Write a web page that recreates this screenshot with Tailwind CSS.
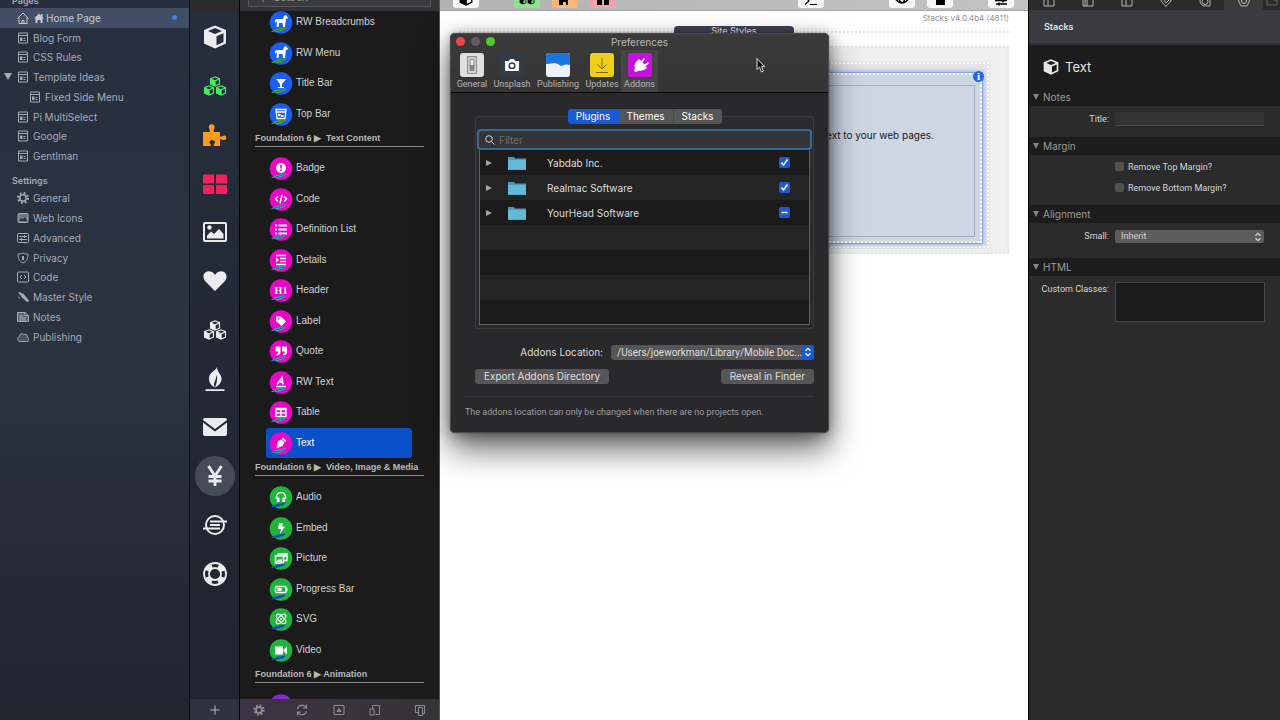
<!DOCTYPE html>
<html lang="en">
<head>
    <meta charset="UTF-8">
    <meta name="viewport" content="width=device-width, initial-scale=1.0">
    <title>RapidWeaver - Home Page</title>
    <script src="https://cdn.jsdelivr.net/npm/@tailwindcss/browser@4"></script>
</head>
<body class="relative flex h-screen overflow-hidden bg-white font-['Inter','Liberation_Sans',sans-serif] text-[11px] leading-4">

    <!-- shared icons -->
    <svg class="hidden">
        <symbol id="cube" viewBox="0 0 24 24"><path fill="currentColor" fill-rule="evenodd" d="M12 .5 23 5v13.5L12 23.5 1 18.500V5zM12 3 5 6l7 3 7-3zM13.500 11.300v9l7-3.300V8.200z"/></symbol>
        <symbol id="cubes" viewBox="0 0 24 24"><use href="#cube" x="6" y="2" width="12" height="11"/><use href="#cube" x="0" y="11" width="12" height="11"/><use href="#cube" x="12" y="11" width="12" height="11"/></symbol>
        <symbol id="page" viewBox="0 0 12 12"><path fill="none" stroke="currentColor" d="M1.500 1h9v10h-9zM1.500 3.500h9"/><path fill="currentColor" d="M3 5.500h2.500V9H3zM6.500 6h2v1h-2zM6.500 8h2v1h-2z"/></symbol>
        <symbol id="feather" viewBox="0 0 24 24"><path fill="currentColor" d="M2 22c3-3 8-4.500 15-4.800-1 3-7 5.500-15 4.800z"/><path stroke="#0007" stroke-width=".7" d="m4 21.700 11-3.200"/></symbol>
        <symbol id="horse" viewBox="0 0 24 24"><path fill="#fff" d="M6 10l2-1h6l1-3 2-1 2 3-1 1-1-.500-.500 4-.500 4.500h-2l-.500-4H10l-.500 4h-2L8 13l-1-2-1 3z"/></symbol>
        <symbol id="updown" viewBox="0 0 8 10"><path fill="none" stroke="currentColor" stroke-width="1.300" d="m1.500 3.800 2.500-2.500 2.500 2.500M1.500 6.200 4 8.700l2.500-2.500"/></symbol>
    </svg>

    <!-- page list -->
    <nav class="w-[190px] shrink-0 border-r border-black/60 bg-linear-to-b from-[#272f3f] via-[#2b3341] to-[#20252e] text-[10px] text-[#a5abb5]">
        <h2 class="flex h-2 items-end overflow-hidden pl-3 text-[9px] font-semibold leading-[14px]">Pages</h2>
        <ul class="grid h-[158px] auto-rows-fr [&_a]:flex [&_a]:h-full [&_a]:items-center [&_a]:gap-1 [&_a]:pl-4 [&_svg]:ml-px [&_svg]:h-3 [&_svg]:w-3">
            <li class="bg-[#424e65] text-[#c5cad3]"><a href="#"><svg viewBox="0 0 12 12" fill="none" stroke="currentColor"><path d="M.500 6.500 6 1l5.500 5.500M2 5.500v6h8v-6M5 11.500v-3h2v3"/></svg><svg class="-mr-1" viewBox="0 0 12 12" fill="currentColor"><path d="m0 6.500 5-5 2 2V2h1.500v3L10 6.500H8.500V11h-2V8h-3v3h-2V6.500z"/></svg>Home Page<span class="ml-auto mr-3 size-[5px] rounded-full bg-[#3d82f0]"></span></a></li>
            <li><a href="#"><svg><use href="#page"/></svg>Blog Form</a></li>
            <li><a href="#"><svg><use href="#page"/></svg>CSS Rules</a></li>
            <li class="relative"><a href="#"><svg><use href="#page"/></svg>Template Ideas</a><span class="absolute left-1 top-1.5 border-x-4 border-t-[7px] border-x-transparent border-t-[#a5abb5]"></span></li>
            <li class="pl-3"><a href="#"><svg><use href="#page"/></svg>Fixed Side Menu</a></li>
            <li><a href="#"><svg><use href="#page"/></svg>Pi MultiSelect</a></li>
            <li><a href="#"><svg><use href="#page"/></svg>Google</a></li>
            <li><a href="#"><svg><use href="#page"/></svg>Gentlman</a></li>
        </ul>
        <h2 class="h-[22px] pl-3 pt-[7px] text-[9px] font-semibold">Settings</h2>
        <ul class="grid h-[159px] auto-rows-fr [&_a]:flex [&_a]:h-full [&_a]:items-center [&_a]:gap-1 [&_a]:pl-4 [&_svg]:ml-px [&_svg]:h-3 [&_svg]:w-3">
            <li><a href="#"><svg viewBox="0 0 12 12" fill="none" stroke="currentColor"><circle cx="6" cy="6" r="3.200" stroke-width="1.500"/><circle cx="6" cy="6" r="5" stroke-width="2" stroke-dasharray="1.900 2.027"/></svg>General</a></li>
            <li><a href="#"><svg viewBox="0 0 12 12"><rect x="1" y="1.500" width="10" height="9" rx="1" fill="#6f7784" stroke="currentColor"/><path fill="#2b3341" d="m2 9 2.500-3L6 7.500 8 5l2 4z"/></svg>Web Icons</a></li>
            <li><a href="#"><svg viewBox="0 0 12 12" fill="none" stroke="currentColor"><rect x=".500" y="1.500" width="11" height="9" rx="1"/><path d="M2 4.500h8M2 7.500h8M7.500 3v3M4.500 6v3"/></svg>Advanced</a></li>
            <li><a href="#"><svg viewBox="0 0 12 12" fill="none" stroke="currentColor"><path d="M6 1c2 1 3 1 5 1 0 5-1.500 7.500-5 9C2.500 9.500 1 7 1 2c2 0 3 0 5-1z"/><path stroke-width="2" d="M6 4v4"/></svg>Privacy</a></li>
            <li><a href="#"><svg viewBox="0 0 12 12" fill="none" stroke="currentColor"><rect x=".500" y="1" width="11" height="10" rx="1"/><path d="M5 4 3 6l2 2M7 4l2 2-2 2"/></svg>Code</a></li>
            <li><a href="#"><svg viewBox="0 0 12 12" fill="currentColor"><path d="m1 1 3 .500L5.500 3l1-.500.500 1 4.500 5.500v2H10L5 6.500 4 6l.500-1-1.500-1zM1 5l2 2-1 1z"/></svg>Master Style</a></li>
            <li><a href="#"><svg viewBox="0 0 12 12" fill="#5d6573" stroke="currentColor"><path d="M.500 1.500H8l3.500 3v6H.500zM8 1.500v3h3M2 5h4M2 7h7M2 9h7"/></svg>Notes</a></li>
            <li><a href="#"><svg viewBox="0 0 12 12" fill="#4b5361" stroke="currentColor"><path d="M2.500 10.500h7a2 2 0 0 0 1-4C10.500 3 8 2.500 7 4 5 1.500 2.500 3 2.500 5.500c-2.500 1-2.500 4.500 0 5z"/></svg>Publishing</a></li>
        </ul>
    </nav>

    <!-- stack filters -->
    <aside class="flex w-[50px] shrink-0 flex-col border-r border-black bg-linear-to-b from-[#262e3d] to-[#20242e] text-[#ececee]">
        <div class="h-[11px] bg-[#2b2b2c]"></div>
        <div class="mt-0.5 grid h-[585px] auto-rows-fr pl-px [&>button]:grid [&>button]:place-items-center [&_svg]:size-6">
            <button aria-label="All"><svg><use href="#cube"/></svg></button>
            <button aria-label="Groups" class="text-[#43f05c]"><svg><use href="#cubes"/></svg></button>
            <button aria-label="Plugins" class="text-[#fb9b1b]"><svg viewBox="0 0 24 24" fill="currentColor"><path d="M0 9h6.500C8 7.500 5 5.500 6 3c1-2.500 4.500-2.500 5.500 0S9.500 7.500 11 9h6v4.500c1.500 1 2.500-1 4.500-1s3 4.500 0 4.500-3-1.500-4.500-.500V23h-6c-1.500-2 1-2 1-4s-5.500-2.500-5.500 0 2.500 2 1 4H0z"/></svg></button>
            <button aria-label="Templates" class="text-[#f7205c]"><svg viewBox="0 0 24 24" fill="currentColor"><rect y="2.500" width="11" height="9" rx="1"/><rect x="13" y="2.500" width="11" height="9" rx="1"/><rect y="13" width="11" height="9" rx="1"/><rect x="13" y="13" width="11" height="9" rx="1"/></svg></button>
            <button aria-label="Images"><svg viewBox="0 0 24 24" fill="currentColor"><rect x="1" y="3" width="22" height="18" rx="1" fill="none" stroke="currentColor" stroke-width="2"/><circle cx="6.500" cy="7.500" r="2.200"/><path d="M4 18.500v-3l4-4 3 2.500 5-5 4.500 5v4.500z"/></svg></button>
            <button aria-label="Favorites"><svg viewBox="0 0 24 24" fill="currentColor"><path d="M12 22 2 12C-1 8 .500 2.500 5.500 2.300 8.500 2.300 11 4 12 6c1-2 3.500-3.700 6.500-3.700C23.500 2.500 25 8 22 12z"/></svg></button>
            <button aria-label="Partials"><svg><use href="#cubes"/></svg></button>
            <button aria-label="Foundry"><svg viewBox="0 0 24 24" fill="currentColor"><path d="M14 0C13 4 6 5 6 11.500c0 4 2 7 5.500 9C10 15 13 14 13.500 8c1 3 1 6-1.500 12.500 4-2 7-5.500 6.500-9.500C18 7 14 5 14 0zM2.500 22.300h19V24h-19z"/></svg></button>
            <button aria-label="Mail"><svg viewBox="0 0 24 24" fill="currentColor"><path d="M0 5q0-2 2-2h20q2 0 2 2L12 14zM0 7.500 12 16.500l12-9V19q0 2-2 2H2q-2 0-2-2z"/></svg></button>
            <button aria-label="Yen"><span class="grid size-10 place-items-center rounded-full bg-[#454b59]"><svg viewBox="0 0 24 24" fill="none" stroke="currentColor" stroke-width="2.800"><path d="m5.500 2 6.500 10 6.500-10M12 12v10M5.500 12.500h13M5.500 17h13"/></svg></span></button>
            <button aria-label="Sources"><svg viewBox="0 0 24 24" fill="none" stroke="currentColor" stroke-width="2"><circle cx="12" cy="12" r="9"/><path d="M7 8.500h17M7 12h10M0 15.500h17"/></svg></button>
            <button aria-label="Support"><svg viewBox="0 0 24 24" fill="none" stroke="currentColor"><circle cx="12" cy="12" r="11" stroke-width="1.800"/><circle cx="12" cy="12" r="6" stroke-width="1.800"/><circle cx="12" cy="12" r="8.500" stroke-width="5" stroke-dasharray="7 6.350" stroke-dashoffset="-3.100"/></svg></button>
        </div>
        <button aria-label="Add" class="mt-auto grid h-[21px] place-items-center bg-[#2f323c] text-[#b5b8bd]"><svg class="size-2.5" viewBox="0 0 10 10" stroke="currentColor"><path d="M5 .500v9M.500 5h9"/></svg></button>
    </aside>

    <!-- stacks library -->
    <section class="flex w-[200px] shrink-0 flex-col border-r border-[#555] bg-[#1b1b1b] font-['Liberation_Sans',sans-serif] text-[10px] text-[#d2d2d2]">
        <div class="flex h-[11px] shrink-0 items-end overflow-hidden bg-[#333437] px-2 pb-1">
            <label class="flex h-5 w-full shrink-0 items-center gap-1 border border-[#55565a] bg-[#3b3c40] pl-1 text-[11px] text-[#8e8e92]">
                <svg class="size-3 shrink-0" viewBox="0 0 12 12" fill="none" stroke="currentColor"><circle cx="5" cy="5" r="3.500"/><path d="m8 8 3 3"/></svg>
                <input type="search" placeholder="Search" aria-label="Search stacks" class="w-full bg-transparent pl-1 outline-none placeholder:text-[#8e8e92]">
            </label>
        </div>
        <div class="-mt-1 flex-1 overflow-hidden [&_h3]:mx-[15px] [&_h3]:mb-1.5 [&_h3]:h-[18px] [&_h3]:whitespace-pre [&_h3]:border-b [&_h3]:border-[#8a8a8a] [&_h3]:text-[9px] [&_h3]:font-bold [&_h3]:leading-[18px] [&_h3]:text-[#b9b9b9] [&_li]:ml-[26px] [&_li]:mr-[27px] [&_li]:flex [&_li]:items-center [&_li]:gap-[3px] [&_li]:rounded-[3px] [&_li]:pl-[3px] [&_svg]:size-6 [&_ul]:grid [&_ul]:auto-rows-fr">
            <ul class="h-[122px] text-[#51a832]">
                <li><svg viewBox="0 0 24 24"><circle cx="12" cy="12.500" r="11.300" fill="#1a5ff0"/><use href="#horse"/><use href="#feather"/></svg><span class="text-[#d2d2d2]">RW Breadcrumbs</span></li>
                <li><svg viewBox="0 0 24 24"><circle cx="12" cy="12.500" r="11.300" fill="#1a5ff0"/><use href="#horse"/><use href="#feather"/></svg><span class="text-[#d2d2d2]">RW Menu</span></li>
                <li><svg viewBox="0 0 24 24"><circle cx="12" cy="12.500" r="11.300" fill="#1a5ff0"/><path fill="#fff" d="M7 8h10l-4 5v3h2v1H9v-1h2v-3z"/><use href="#feather"/></svg><span class="text-[#d2d2d2]">Title Bar</span></li>
                <li><svg viewBox="0 0 24 24"><circle cx="12" cy="12.500" r="11.300" fill="#1a5ff0"/><path fill="none" stroke="#fff" stroke-width="1.300" d="M7 7.500h10l-1 9H8zM7.500 10h9"/><path fill="#fff" d="M9 12h2.500v2H9zM12 13h2.500v2H12z"/><use href="#feather"/></svg><span class="text-[#d2d2d2]">Top Bar</span></li>
            </ul>
            <h3>Foundation 6 ▶  Text Content</h3>
            <ul class="h-[305px] text-[#35a5b8]">
                <li><svg viewBox="0 0 24 24"><circle cx="12" cy="12.500" r="11.300" fill="#ea05c8"/><circle cx="12" cy="12" r="5" fill="#fff"/><path stroke="#ea05c8" stroke-width="1.600" d="M12 9v3.500M12 13.500v1.500"/><use href="#feather"/></svg><span class="text-[#d2d2d2]">Badge</span></li>
                <li><svg viewBox="0 0 24 24"><circle cx="12" cy="12.500" r="11.300" fill="#ea05c8"/><path fill="none" stroke="#fff" stroke-width="1.500" d="m9 9.500-2.500 2.500L9 14.500M15 9.500l2.500 2.500-2.500 2.500M13 8l-2 8.500"/><use href="#feather"/></svg><span class="text-[#d2d2d2]">Code</span></li>
                <li><svg viewBox="0 0 24 24"><circle cx="12" cy="12.500" r="11.300" fill="#ea05c8"/><path stroke="#fff" stroke-width="1.800" d="M6 8.500h2M6 12.500h2M6 16.500h2M9.500 8.500H18M9.500 12.500H18M9.500 16.500H18"/><use href="#feather"/></svg><span class="text-[#d2d2d2]">Definition List</span></li>
                <li><svg viewBox="0 0 24 24"><circle cx="12" cy="12.500" r="11.300" fill="#ea05c8"/><path stroke="#fff" stroke-width="1.500" d="M7 7.500h10M11 10.500h6M11 13.500h6M7 16.500h10"/><path fill="#fff" d="m7 9.500 3 2.500-3 2.500z"/><use href="#feather"/></svg><span class="text-[#d2d2d2]">Details</span></li>
                <li><svg viewBox="0 0 24 24"><circle cx="12" cy="12.500" r="11.300" fill="#ea05c8"/><text x="12" y="15.500" text-anchor="middle" font-family="Liberation Serif" font-weight="bold" font-size="10" fill="#fff">H1</text><use href="#feather"/></svg><span class="text-[#d2d2d2]">Header</span></li>
                <li><svg viewBox="0 0 24 24"><circle cx="12" cy="12.500" r="11.300" fill="#ea05c8"/><path fill="#fff" fill-rule="evenodd" d="M7 7.500h5l5 5-4.500 4.500-5.500-5zM9 9v1.500h1.500V9z"/><use href="#feather"/></svg><span class="text-[#d2d2d2]">Label</span></li>
                <li><svg viewBox="0 0 24 24"><circle cx="12" cy="12.500" r="11.300" fill="#ea05c8"/><path fill="#fff" d="M6.500 7.500h5v5.500q0 3-4 3.500V15q2-.500 2-2.500h-3zM13 7.500h5v5.500q0 3-4 3.500V15q2-.500 2-2.500h-3z"/><use href="#feather"/></svg><span class="text-[#d2d2d2]">Quote</span></li>
                <li><svg viewBox="0 0 24 24"><circle cx="12" cy="12.500" r="11.300" fill="#ea05c8"/><path fill="none" stroke="#fff" stroke-width="1.500" d="m8 14.500 5-7 1 7M10 12h4M7 16.500h10"/><use href="#feather"/></svg><span class="text-[#d2d2d2]">RW Text</span></li>
                <li><svg viewBox="0 0 24 24"><circle cx="12" cy="12.500" r="11.300" fill="#ea05c8"/><path fill="none" stroke="#fff" stroke-width="1.400" d="M7 8.500h10v8H7zM12 10v6M7 13h10M7 9.500h10"/><use href="#feather"/></svg><span class="text-[#d2d2d2]">Table</span></li>
                <li class="bg-[#0a50c8]"><svg viewBox="0 0 24 24"><circle cx="12" cy="12.500" r="11.300" fill="#ea05c8"/><path fill="#fff" d="m14 6.500 3.500 3.500-1.500 1-3-3zM12.500 8.500l3 3-2 3.500-6.500 2.500 3-3.500-1 .500-1.500 1.500L9 10z"/><use href="#feather"/></svg><span class="text-white">Text</span></li>
            </ul>
            <h3>Foundation 6 ▶  Video, Image &amp; Media</h3>
            <ul class="h-[183px] text-[#235ec4]">
                <li><svg viewBox="0 0 24 24"><circle cx="12" cy="12.500" r="11.300" fill="#1fb53c"/><path fill="none" stroke="#fff" stroke-width="1.500" d="M7.500 14v-2a4.500 4.500 0 0 1 9 0v2"/><path fill="#fff" d="M8 12.500h2.500V17H8zM13.500 12.500H16V17h-2.500z"/><use href="#feather"/></svg><span class="text-[#d2d2d2]">Audio</span></li>
                <li><svg viewBox="0 0 24 24"><circle cx="12" cy="12.500" r="11.300" fill="#1fb53c"/><path fill="#fff" d="M10 7h4l-1 3.500h3L11 18l1-5H9z"/><use href="#feather"/></svg><span class="text-[#d2d2d2]">Embed</span></li>
                <li><svg viewBox="0 0 24 24"><circle cx="12" cy="12.500" r="11.300" fill="#1fb53c"/><path fill="none" stroke="#fff" stroke-width="1.400" d="M6.500 10h8v7h-8zM9 10V8h9v6.500h-3"/><path fill="#fff" d="m7 16 2.500-3 1.500 1 1-1.500 2 3.500zM15 8h3v3h-3z"/><use href="#feather"/></svg><span class="text-[#d2d2d2]">Picture</span></li>
                <li><svg viewBox="0 0 24 24"><circle cx="12" cy="12.500" r="11.300" fill="#1fb53c"/><rect x="6.500" y="9.500" width="10.500" height="6" rx="1" fill="none" stroke="#fff" stroke-width="1.400"/><path fill="#fff" d="M8.500 11h4v3h-4zM17 11h1.500v3H17z"/><use href="#feather"/></svg><span class="text-[#d2d2d2]">Progress Bar</span></li>
                <li><svg viewBox="0 0 24 24"><circle cx="12" cy="12.500" r="11.300" fill="#1fb53c"/><g fill="none" stroke="#fff" stroke-width="1.200"><ellipse cx="12" cy="12" rx="6" ry="2.700" transform="rotate(45 12 12)"/><ellipse cx="12" cy="12" rx="6" ry="2.700" transform="rotate(-45 12 12)"/></g><circle cx="12" cy="12" r="1" fill="#fff"/><use href="#feather"/></svg><span class="text-[#d2d2d2]">SVG</span></li>
                <li><svg viewBox="0 0 24 24"><circle cx="12" cy="12.500" r="11.300" fill="#1fb53c"/><path fill="#fff" d="M6 8.500h8v8H6zM14.500 12l3.500-3.500v8L14.500 13z"/><use href="#feather"/></svg><span class="text-[#d2d2d2]">Video</span></li>
            </ul>
            <h3>Foundation 6 ▶ Animation</h3>
            <ul class="h-[31px]">
                <li><svg viewBox="0 0 24 24"><circle cx="12" cy="12.500" r="11.300" fill="#8a2bd0"/></svg></li>
            </ul>
        </div>
        <div class="flex h-[21px] shrink-0 items-center justify-between bg-linear-to-r from-[#3e3444] to-[#343336] pl-[13px] pr-[13px] text-[#8d8d90] [&_svg]:size-3">
            <button aria-label="Settings"><svg viewBox="0 0 12 12" fill="none" stroke="currentColor"><circle cx="6" cy="6" r="3" stroke-width="2"/><circle cx="6" cy="6" r="4.800" stroke-width="1.800" stroke-dasharray="1.800 1.970"/></svg></button>
            <button aria-label="Refresh" class="ml-1.5"><svg viewBox="0 0 12 12" fill="none" stroke="currentColor" stroke-width="1.200"><path d="M1.500 5A4.600 4.600 0 0 1 10 3.500M10.500 7A4.600 4.600 0 0 1 2 8.500M10.500.500v3.500H7M1.500 11.500V8H5"/></svg></button>
            <button aria-label="Info"><svg viewBox="0 0 12 12" fill="none" stroke="currentColor"><path d="M1 1.500h10v9H1z"/><path fill="currentColor" d="m4 7.500 2-3 2 3z"/></svg></button>
            <button aria-label="Window"><svg viewBox="0 0 12 12" fill="none" stroke="currentColor"><path d="M3.500 4.500v-3h7v9h-4M1 5h4v6H1z"/></svg></button>
            <button aria-label="Split" class="ml-2"><svg viewBox="0 0 12 12" fill="none" stroke="currentColor"><path d="M4 8.500H1.500v-7h9v8H9M4.500 3.500h4v8h-4z"/></svg></button>
        </div>
    </section>

    <!-- canvas -->
    <main class="flex min-w-0 flex-1 flex-col bg-white">
        <div class="flex h-[11px] shrink-0 items-start border-b border-[#a5a5a5] bg-linear-to-r from-[#b2b2b2] to-[#c2c4c3] pl-[13px] pr-3.5 text-black [&>button]:flex [&>button]:h-2 [&>button]:w-[26px] [&>button]:items-end [&>button]:justify-center [&>button]:overflow-hidden [&>button]:rounded-b-[3px] [&>button]:bg-[#f6f6f6] [&>button]:pb-0.5 [&_svg]:size-3.5 [&_svg]:shrink-0">
            <button aria-label="Stack"><svg><use href="#cube"/></svg></button>
            <button aria-label="Groups" class="ml-[35px] !bg-[#8be58a]"><svg class="!size-4"><use href="#cubes"/></svg></button>
            <button aria-label="Plugins" class="ml-3 !bg-[#fbb678]"><svg viewBox="0 0 14 14"><path d="M1 4h3V1h3v3h5v3h-2v6H8v-3H5v3H1z"/></svg></button>
            <button aria-label="Templates" class="ml-3 !bg-[#f8a0ac]"><svg viewBox="0 0 14 14"><path d="M1 1h5v5H1zM8 1h5v5H8zM1 8h5v5H1zM8 8h5v5H8z"/></svg></button>
            <button aria-label="Console" class="ml-auto"><svg viewBox="0 0 14 14" fill="none" stroke="#000" stroke-width="1.200"><path d="m1 5 4 4-4 3.500M6 12.500h7"/></svg></button>
            <button aria-label="Preview" class="ml-[65px]"><svg viewBox="0 0 14 14" fill="none" stroke="#000" stroke-width="1.500"><path d="M1 7.500q6-7 12 0-6 7-12 0z"/><circle cx="7" cy="8" r="2.500"/></svg></button>
            <button aria-label="Stop" class="ml-3"><svg viewBox="0 0 14 14"><path d="M3 3h9v10H3z"/></svg></button>
            <button aria-label="Options" class="ml-[35px]"><svg viewBox="0 0 14 14" stroke="#000" stroke-width="1.500"><path d="M1 8.500h12M2 12h11M9 6.500v4M5 10.500v3"/></svg></button>
        </div>
        <div class="px-[19px]">
            <p class="h-[22px] border-b-2 border-dotted border-[#e8e8e8] text-right text-[8px] leading-[14px] text-[#909090]">Stacks v4.0.4b4 (4811)</p>
            <div class="mt-[13px] border-2 border-l-0 border-dotted border-[#e6e6e6] bg-[#efefef] pb-1 pr-[18px] pt-3.5">
                <div class="border-2 border-dotted border-white bg-[#e5e5e8] pb-0.5 pr-1 pt-2 shadow-[0_0_0_1px_#e8e8e8]">
                    <div class="relative border border-[#86a5e4] shadow-[0_0_5px_#7f9fe0]">
                        <div class="border-2 border-dotted border-white bg-[#cdd7e4] pb-1 pr-[5px] pt-2.5">
                            <div class="h-[152px] border border-[#a5aec4] pr-10 pt-10 text-right text-[10px] leading-[18px] text-[#15171c]">Add text to your web pages.</div>
                        </div>
                        <span class="absolute -right-0.5 -top-0.5 grid size-[11px] place-items-center rounded-full bg-[#2769dd] font-['Liberation_Serif',serif] text-[11px] font-bold leading-none text-white">i</span>
                    </div>
                </div>
            </div>
        </div>
        <div class="absolute left-[674px] top-[26px] h-4 w-[120px] rounded-t bg-[#414155] text-center text-[9px] font-medium leading-[10px] text-[#ddd]">Site Styles</div>
    </main>

    <!-- inspector -->
    <aside class="w-[252px] shrink-0 border-l border-black bg-[#2b2b2b] font-['Roboto','Inter',sans-serif] text-[9px] text-[#d5d5d5] [&_h3]:flex [&_h3]:h-[18px] [&_h3]:items-center [&_h3]:gap-1 [&_h3]:bg-[#1c1c1c] [&_h3]:pl-1 [&_h3]:font-['Inter'] [&_h3]:text-[10px] [&_h3]:text-[#9b9b9b] [&_h3]:before:border-x-[3px] [&_h3]:before:border-t-[6px] [&_h3]:before:border-x-transparent [&_h3]:before:border-t-[#858585] [&_h3]:before:content-['']">
        <div class="flex h-2.5 items-start bg-[#2b2b2b] text-[#b5b5b5] [&>button]:flex [&>button]:h-2.5 [&>button]:flex-1 [&>button]:items-end [&>button]:justify-center [&>button]:overflow-hidden [&>button]:pb-[3px] [&_svg]:size-3 [&_svg]:shrink-0">
            <button aria-label="Page"><svg viewBox="0 0 12 12" fill="none" stroke="currentColor"><path d="M1 1h10v10H1zM5 1v10"/></svg></button>
            <button aria-label="Header"><svg viewBox="0 0 12 12" fill="none" stroke="currentColor"><path d="M1 1h10v10H1zM3 1v10M5 1v10"/></svg></button>
            <button aria-label="Sidebar"><svg viewBox="0 0 12 12" fill="none" stroke="currentColor"><path d="M1 1h10v10H1zM5 1v10"/></svg></button>
            <button aria-label="Meta"><svg viewBox="0 0 12 12" fill="none" stroke="currentColor"><path d="M1 1h10v5l-5 5.500L1 6zM4 5l2 3 3-3"/></svg></button>
            <button aria-label="Images"><svg viewBox="0 0 12 12" fill="none" stroke="currentColor"><path d="M1 6a5 5 0 0 1 10-1v6H6a5 5 0 0 1-5-5z"/><circle cx="6" cy="6.500" r="3"/></svg></button>
            <button aria-label="Stacks" class="bg-[#3b3b3b]"><svg viewBox="0 0 12 12" fill="none" stroke="currentColor"><path d="M3 1h6l2.500 5L9 11H3L.500 6z"/><circle cx="6" cy="6" r="2.500"/></svg></button>
            <button aria-label="More" class="max-w-[17px] text-[#666]"><svg viewBox="0 0 12 12" fill="none" stroke="currentColor"><path d="M1 1h10v9H1zM7 5h4"/></svg></button>
        </div>
        <h2 class="flex h-[35px] items-center border-b-2 border-[#2e2e31] bg-[#3b3b3f] pl-[15px] font-['Inter'] text-[9px] font-semibold text-[#e5e5e5]">Stacks</h2>
        <div class="flex h-[43px] items-center gap-1.5 bg-[#1c1c1c] pl-3.5 font-['Inter'] text-[13px] text-[#e5e5e5]"><svg class="size-4"><use href="#cube"/></svg>Text</div>

        <h3>Notes</h3>
        <div class="grid h-[31px] grid-cols-[80px_1fr] items-start gap-x-1.5 pr-4 pt-1.5">
            <label for="title" class="text-right leading-[14px]">Title:</label>
            <input id="title" type="text" class="h-3.5 border-b border-[#474747] bg-[#333]">
        </div>

        <h3>Margin</h3>
        <div class="h-[50px] pl-[86px] pt-px [&_input]:size-[9px] [&_input]:appearance-none [&_input]:rounded-xs [&_input]:bg-[#525252] [&_label]:flex [&_label]:h-[21px] [&_label]:items-center [&_label]:gap-1">
            <label><input type="checkbox">Remove Top Margin?</label>
            <label><input type="checkbox">Remove Bottom Margin?</label>
        </div>

        <h3>Alignment</h3>
        <div class="grid h-[35px] grid-cols-[80px_1fr] items-start gap-x-1.5 pr-4 pt-[7px]">
            <label for="small" class="text-right leading-[13px]">Small:</label>
            <div class="relative">
                <select id="small" class="block h-[13px] w-full appearance-none rounded-xs bg-[#5c5c5c] pl-1.5 leading-[13px]"><option>Inherit</option></select>
                <svg class="pointer-events-none absolute right-0.5 top-0.5 h-2.5 w-2"><use href="#updown"/></svg>
            </div>
        </div>

        <h3>HTML</h3>
        <div class="grid grid-cols-[80px_1fr] items-start gap-x-1.5 pr-[15px] pt-1.5">
            <label for="classes" class="text-right leading-[14px]">Custom Classes:</label>
            <textarea id="classes" class="block h-10 resize-none border border-[#464646] bg-[#1c1c1c]"></textarea>
        </div>
    </aside>

    <!-- preferences window -->
    <div role="dialog" aria-label="Preferences" class="absolute left-[450px] top-[33px] w-[379px] rounded-[5px] border border-[#4c4c4c] bg-[#29282a] pb-3 text-[10px] text-[#dedede] shadow-[0_16px_32px_rgba(0,0,0,0.6),0_2px_14px_rgba(0,0,0,0.35),0_0_1px_#000]">
        <header class="rounded-t-[5px] border-b border-black bg-linear-to-b from-[#3b3b3b] to-[#343434]">
            <div class="relative h-4 text-center leading-[17px] text-[#b8b8b8]">
                <div class="absolute left-[5px] top-[3px] flex gap-1.5 [&>button]:size-[9px] [&>button]:rounded-full">
                    <button aria-label="Close" class="bg-[#f24349]"></button>
                    <button aria-label="Minimize" class="bg-[#5e5e5e]"></button>
                    <button aria-label="Zoom" class="bg-[#4fcb2c]"></button>
                </div>
                Preferences
            </div>
            <div class="flex pl-0.5 font-['Roboto','Inter',sans-serif] text-[9px] text-[#b5b5b5] [&>button]:flex [&>button]:h-[42px] [&>button]:flex-col [&>button]:items-center [&>button]:pt-[3px] [&>button]:leading-[14px] [&_svg]:size-6">
                <button class="w-[38px]"><svg viewBox="0 0 24 24"><rect width="24" height="24" rx="3" fill="#e0e0e0"/><rect x="7.500" y="3.500" width="9" height="17" fill="#cfcfcf" stroke="#909090"/><path fill="#e8e8e8" stroke="#888" d="M10 6.500h4v11h-4z"/><path fill="#888" d="M10 12h4v5h-4z"/></svg>General</button>
                <button class="w-[42px]"><svg viewBox="0 0 24 24"><rect width="24" height="24" rx="3" fill="#313b46"/><path fill="#fff" d="M5 8h4l1-2h4l1 2h4v10H5z"/><circle cx="12" cy="12.800" r="2.800" fill="none" stroke="#313b46" stroke-width="1.500"/></svg>Unsplash</button>
                <button class="w-[50px]"><svg viewBox="0 0 24 24"><rect width="24" height="24" rx="3" fill="#eef2f6"/><path fill="#1c74e2" d="M3 0h18q3 0 3 3v9q-5-1.500-9 1-5-4.500-10-2.500L0 11V3q0-3 3-3z"/></svg>Publishing</button>
                <button class="w-[38px]"><svg viewBox="0 0 24 24"><rect width="24" height="24" rx="3" fill="#efd018"/><path fill="none" stroke="#7d6a08" d="M12 5v11M7.500 11.500 12 16l4.500-4.500M6 19.500h12"/></svg>Updates</button>
                <button class="w-[37px] bg-[#454545]"><svg viewBox="0 0 24 24"><rect width="24" height="24" rx="3" fill="#c412dc"/><path fill="#fff" d="m11 6 2 2 3-3 1 1-2.500 3.500 2 2L20 9l1 1-3.500 3.500L19 15q-4 3.500-8 2.500l-3 1.500-2-1 1-3q-2-4 4-9z"/></svg>Addons</button>
            </div>
        </header>

        <div class="pl-6 pr-3.5 pt-4">
            <div class="flex justify-center">
                <div class="z-10 flex rounded-[3px] text-white [&>button]:h-[15px] [&>button]:bg-[#565656] [&>button]:leading-[15px]">
                    <button class="w-[51px] rounded-l-[3px] !bg-[#1859d6]">Plugins</button>
                    <button class="w-[55px] border-r border-[#484848]">Themes</button>
                    <button class="w-12 rounded-r-[3px]">Stacks</button>
                </div>
            </div>
            <div class="-mt-2 rounded-[3px] border border-[#3a393b] bg-[#2b2a2c] px-[3px] pb-[3px] pt-3.5">
                <label class="flex h-[17px] items-center gap-1 rounded-[2px] bg-[#353537] pl-1.5 ring-2 ring-[#356c93]">
                    <svg class="size-2.5" viewBox="0 0 10 10" fill="none" stroke="#d0d0d0"><circle cx="4" cy="4" r="3.300"/><path d="m6.500 6.500 3 3"/></svg>
                    <input type="search" placeholder="Filter" aria-label="Filter" class="flex-1 bg-transparent outline-none placeholder:text-[#707070]">
                </label>
                <div class="mt-px border border-[#5d5d5d]">
                    <table class="w-full table-fixed bg-[#1b1b1c] [&_input]:size-[11px] [&_input]:appearance-none [&_input]:rounded-[2px] [&_input]:bg-[#1f5ad2] [&_tr]:h-[25px] [&_tr:nth-child(even)]:bg-[#242425] [&_tr:last-child]:h-6">
                        <colgroup><col class="w-[28px]"><col class="w-[39px]"><col><col class="w-[30px]"></colgroup>
                        <tbody>
                            <tr>
                                <td><span class="ml-1.5 block w-0 border-y-[3px] border-l-[6px] border-y-transparent border-l-[#a5a5a5]"></span></td>
                                <td><svg class="h-3.5 w-[18px]" viewBox="0 0 18 14"><path fill="#4a9cba" d="M0 1h6l1 1.500h11V14H0z"/><path fill="#62b9d8" d="M0 4h18v9.500H0z"/></svg></td>
                                <td>Yabdab Inc.</td>
                                <td><div class="relative size-[11px]"><input type="checkbox" checked aria-label="Yabdab Inc." class="block"><svg class="pointer-events-none absolute inset-0" viewBox="0 0 11 11" fill="none" stroke="#fff" stroke-width="1.500"><path d="m2.500 5.500 2 2.500 4-5.500"/></svg></div></td>
                            </tr>
                            <tr>
                                <td><span class="ml-1.5 block w-0 border-y-[3px] border-l-[6px] border-y-transparent border-l-[#a5a5a5]"></span></td>
                                <td><svg class="h-3.5 w-[18px]" viewBox="0 0 18 14"><path fill="#4a9cba" d="M0 1h6l1 1.500h11V14H0z"/><path fill="#62b9d8" d="M0 4h18v9.500H0z"/></svg></td>
                                <td>Realmac Software</td>
                                <td><div class="relative size-[11px]"><input type="checkbox" checked aria-label="Realmac Software" class="block"><svg class="pointer-events-none absolute inset-0" viewBox="0 0 11 11" fill="none" stroke="#fff" stroke-width="1.500"><path d="m2.500 5.500 2 2.500 4-5.500"/></svg></div></td>
                            </tr>
                            <tr>
                                <td><span class="ml-1.5 block w-0 border-y-[3px] border-l-[6px] border-y-transparent border-l-[#a5a5a5]"></span></td>
                                <td><svg class="h-3.5 w-[18px]" viewBox="0 0 18 14"><path fill="#4a9cba" d="M0 1h6l1 1.500h11V14H0z"/><path fill="#62b9d8" d="M0 4h18v9.500H0z"/></svg></td>
                                <td>YourHead Software</td>
                                <td><div class="relative size-[11px]"><input type="checkbox" checked aria-label="YourHead Software" class="block"><svg class="pointer-events-none absolute inset-0" viewBox="0 0 11 11" stroke="#fff" stroke-width="1.500"><path d="M2.500 5.500h6"/></svg></div></td>
                            </tr>
                            <tr><td colspan="4"></td></tr>
                            <tr><td colspan="4"></td></tr>
                            <tr><td colspan="4"></td></tr>
                            <tr><td colspan="4"></td></tr>
                        </tbody>
                    </table>
                </div>
            </div>

            <div class="mt-[15px] flex items-center justify-end gap-2">
                <label for="location">Addons Location:</label>
                <div class="relative w-[203px]">
                    <select id="location" class="block h-[15px] w-full appearance-none rounded-[3px] bg-[#565656] pl-1.5 font-['Roboto','Inter',sans-serif] leading-[15px]"><option>/Users/joeworkman/Library/Mobile Doc...</option></select>
                    <span class="pointer-events-none absolute right-0 top-0 grid h-[15px] w-3 place-items-center rounded-r-[3px] bg-[#1859d6] text-white"><svg class="h-2.5 w-2"><use href="#updown"/></svg></span>
                </div>
            </div>
            <div class="mt-[9px] flex justify-between [&>button]:h-[15px] [&>button]:rounded-[3px] [&>button]:bg-[#565656] [&>button]:px-[9px] [&>button]:leading-[15px]">
                <button>Export Addons Directory</button>
                <button>Reveal in Finder</button>
            </div>
        </div>
        <p class="mx-3.5 mt-3 border-t border-[#38373a] pt-2 font-['Roboto','Inter',sans-serif] text-[9px] leading-[15px] text-[#9d9d9d]">The addons location can only be changed when there are no projects open.</p>
    </div>

    <!-- mouse pointer -->
    <svg class="pointer-events-none absolute left-[756px] top-[57px] h-4 w-2.5" viewBox="0 0 10 16"><path fill="#111" stroke="#ddd" d="M1 1.500v11l2.500-2.300L5.500 15l2-1-2-4.300h3.300z"/></svg>
</body>
</html>
